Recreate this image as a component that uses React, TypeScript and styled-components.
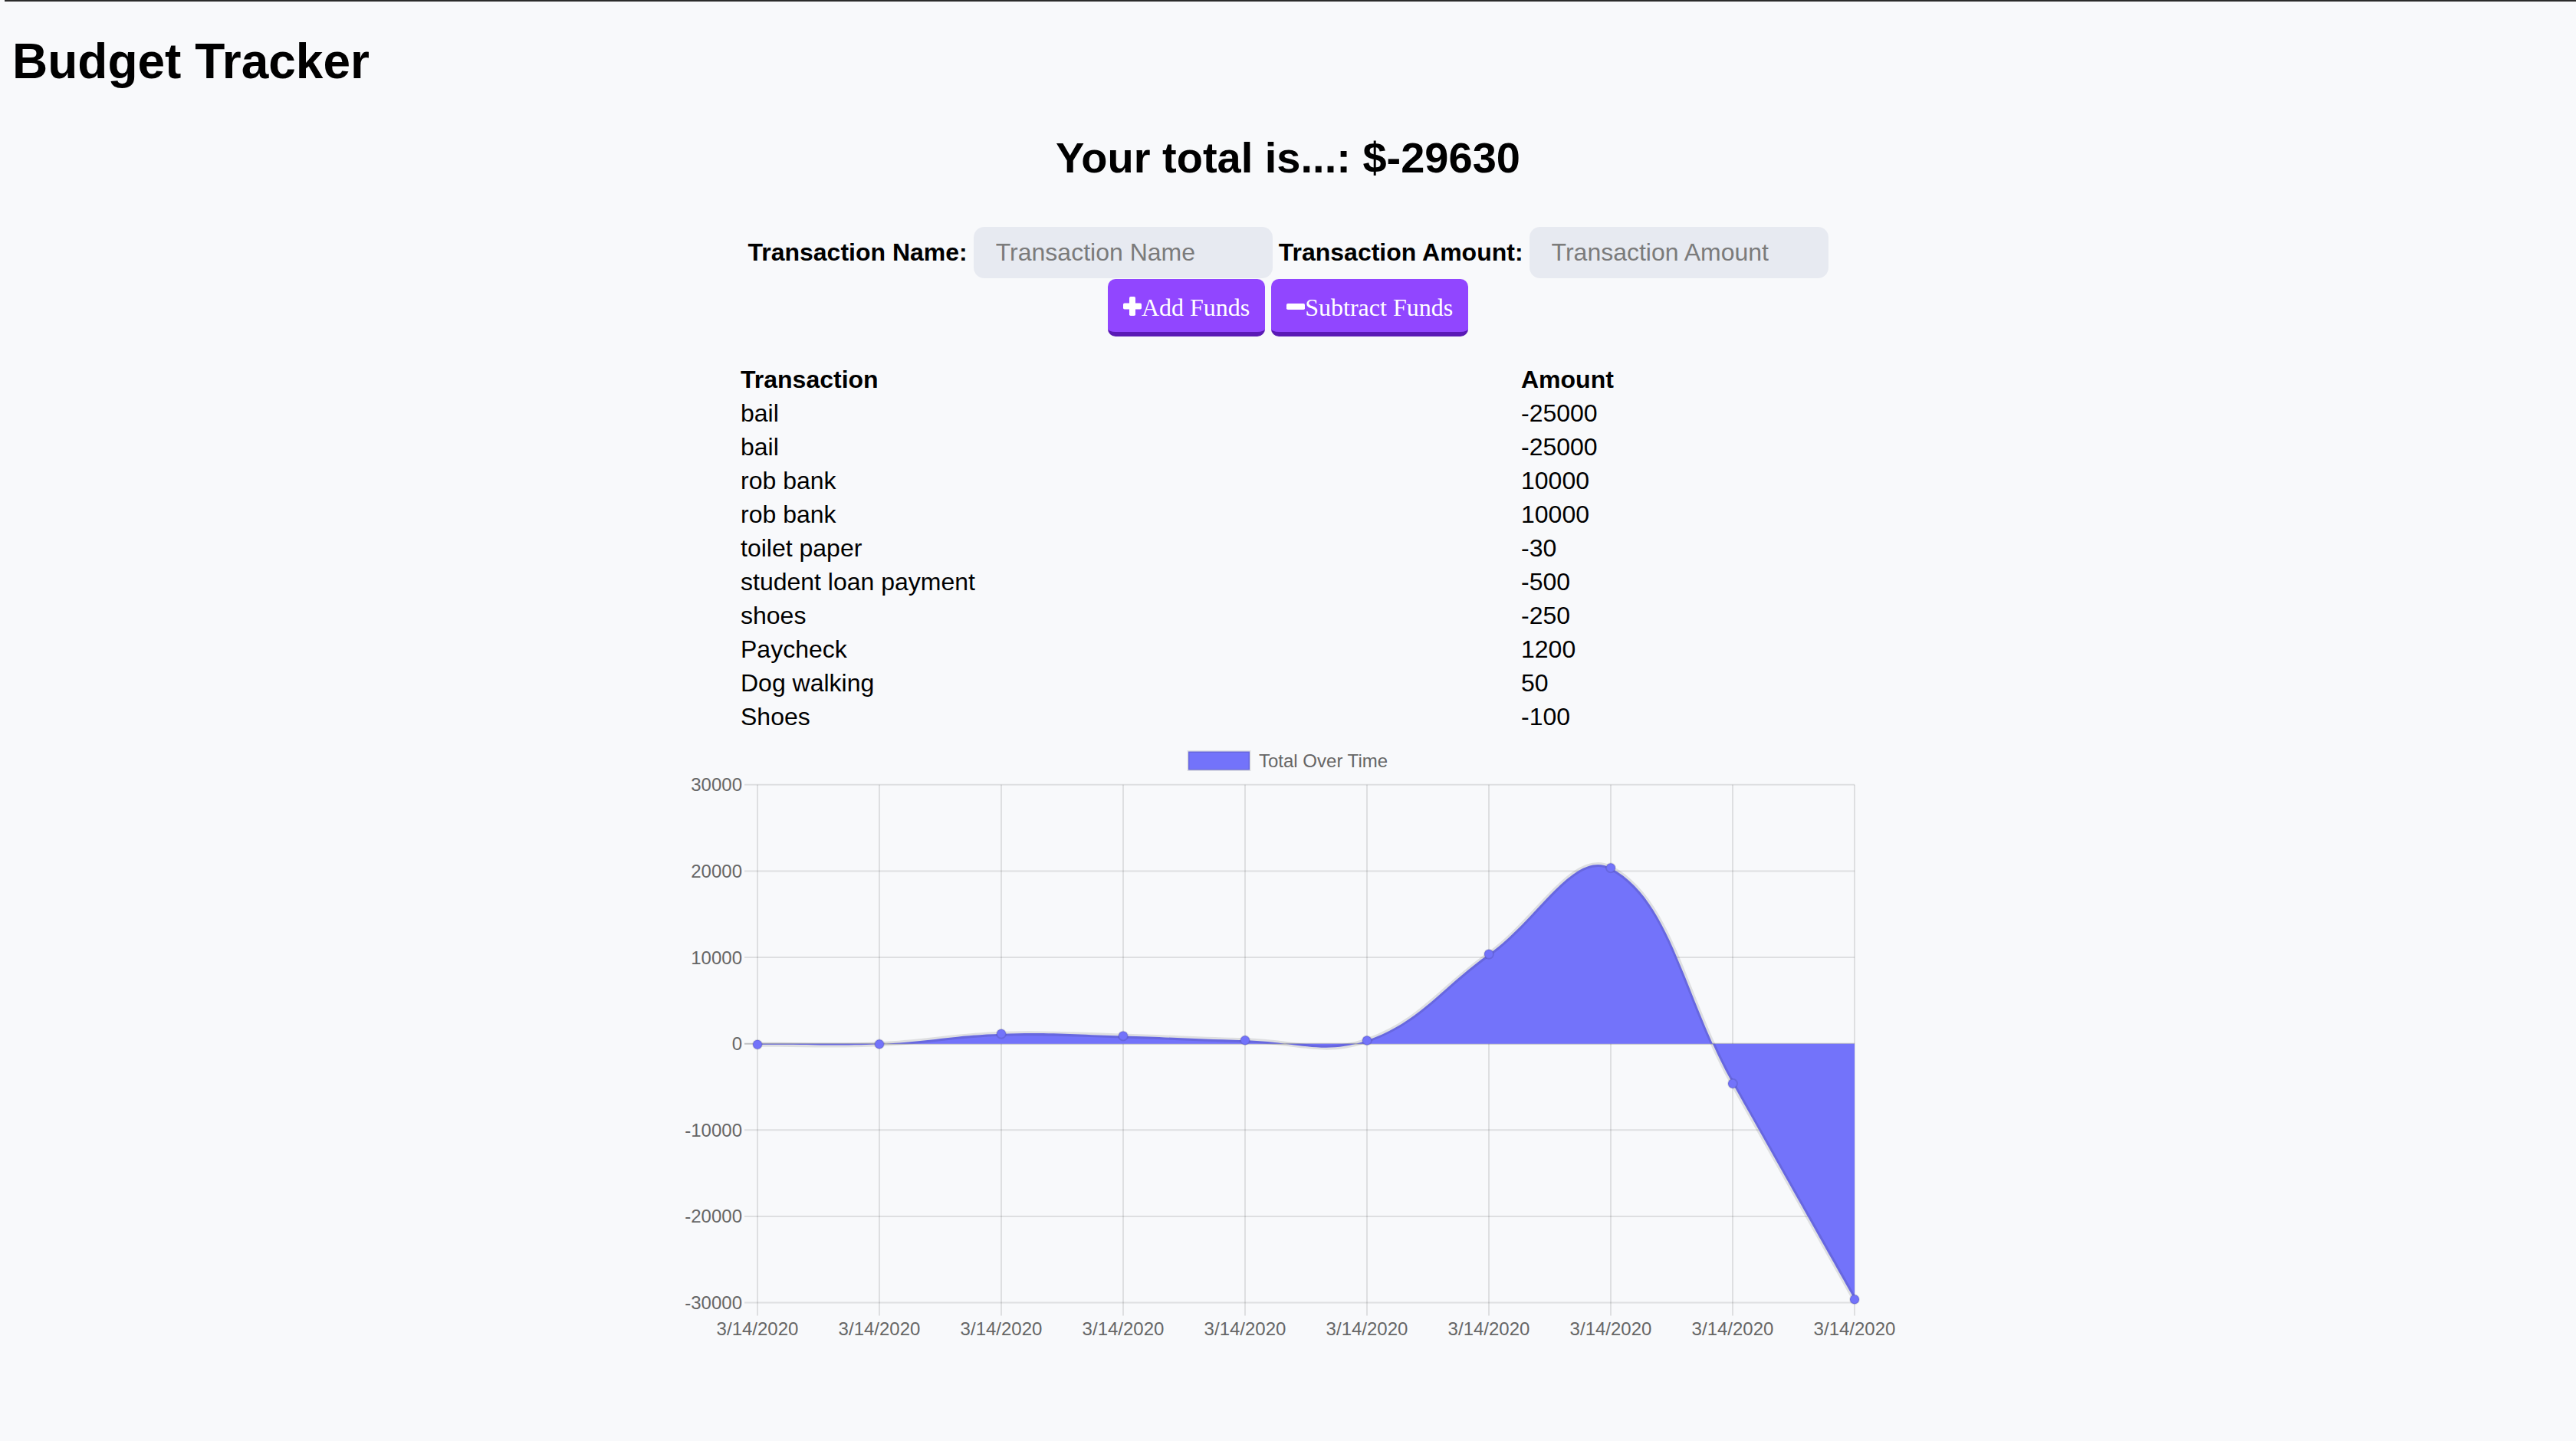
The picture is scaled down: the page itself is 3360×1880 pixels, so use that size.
import React from "react";
import styled, { createGlobalStyle } from "styled-components";

const GlobalStyle = createGlobalStyle`
  *, *::before, *::after { box-sizing: border-box; }
  html, body {
    margin: 0;
    padding: 0;
    background: #f8f9fb;
  }
  body {
    min-height: 1880px;
    font-family: "Liberation Sans", Arial, Helvetica, sans-serif;
    color: #000;
  }
`;

const ScreenEdge = styled.div`
  position: fixed;
  top: 0;
  left: 6px;
  right: 0;
  height: 2px;
  background: #2b2b2b;
  pointer-events: none;
`;

const Page = styled.main`
  padding: 44px 16px 0;
`;

const Title = styled.h1`
  margin: 0;
  font-size: 64px;
  line-height: 72px;
  font-weight: 700;
`;

const Total = styled.h2`
  margin: 58px 0 0;
  font-size: 56px;
  line-height: 64px;
  font-weight: 700;
  text-align: center;
`;

const EntryForm = styled.form`
  display: flex;
  flex-direction: column;
  align-items: center;
  margin-top: 58px;
`;

const FieldRow = styled.div`
  display: flex;
  align-items: center;
  gap: 8px;
`;

const FieldLabel = styled.label`
  font-size: 32px;
  line-height: 37px;
  font-weight: 700;
  white-space: nowrap;
`;

const TextField = styled.input`
  width: 390px;
  height: 67px;
  padding: 0 29px;
  border: none;
  border-radius: 14px;
  background: #e7eaf1;
  font-family: "Liberation Sans", Arial, sans-serif;
  font-size: 32px;
  color: #000;
  outline: none;
  &::placeholder {
    color: #7b7b7b;
  }
`;

const ButtonRow = styled.div`
  display: flex;
  gap: 8px;
  margin-top: 1px;
`;

const FundButton = styled.button`
  display: flex;
  align-items: flex-start;
  height: 75px;
  padding: 19px 20px 13px;
  border: none;
  border-bottom: 6px solid #5a1ab5;
  border-radius: 10px;
  background: #9146ff;
  color: #fff;
  font-family: "Liberation Serif", "Times New Roman", serif;
  font-size: 32px;
  line-height: 37px;
  cursor: pointer;
`;

const ButtonIcon = styled.svg`
  display: block;
  flex: none;
  width: 24px;
  height: 25px;
  margin-top: 4px;
`;

const Ledger = styled.table`
  width: 1440px;
  margin: 32px auto 0;
  border-spacing: 4px;
  table-layout: fixed;
  font-size: 32px;
  line-height: 36px;
`;

const HeadCell = styled.th`
  padding: 2px;
  text-align: left;
  font-weight: 700;
  &:first-child {
    width: 1014px;
  }
`;

const Cell = styled.td`
  padding: 2px;
  text-align: left;
`;

const ChartFrame = styled.svg`
  display: block;
  margin: 0 auto;
  width: 1600px;
  height: 820px;
  font-family: "Liberation Sans", Helvetica, Arial, sans-serif;
`;

const transactions: [string, number][] = [
  ["bail", -25000],
  ["bail", -25000],
  ["rob bank", 10000],
  ["rob bank", 10000],
  ["toilet paper", -30],
  ["student loan payment", -500],
  ["shoes", -250],
  ["Paycheck", 1200],
  ["Dog walking", 50],
  ["Shoes", -100],
];

type Pt = { x: number; y: number };

const AREA = { left: 988, right: 2419, top: 1023.3, bottom: 1699 };
const STEP = (AREA.bottom - AREA.top) / 6;
const ZERO_Y = AREA.top + 3 * STEP;
const FILL = "#7373fa";

function splineCurve(prev: Pt, cur: Pt, next: Pt, t: number) {
  const d01 = Math.hypot(cur.x - prev.x, cur.y - prev.y);
  const d12 = Math.hypot(next.x - cur.x, next.y - cur.y);
  let s01 = d01 / (d01 + d12);
  let s12 = d12 / (d01 + d12);
  if (isNaN(s01)) s01 = 0;
  if (isNaN(s12)) s12 = 0;
  const fa = t * s01;
  const fb = t * s12;
  return {
    prev: { x: cur.x - fa * (next.x - prev.x), y: cur.y - fa * (next.y - prev.y) },
    next: { x: cur.x + fb * (next.x - prev.x), y: cur.y + fb * (next.y - prev.y) },
  };
}

const clamp = (v: number, a: number, b: number) => Math.max(a, Math.min(b, v));

function buildChart() {
  const chronological = [...transactions].reverse();
  let running = 0;
  const totals = chronological.map(([, v]) => (running += v));
  const n = totals.length;
  const pts: Pt[] = totals.map((v, i) => ({
    x: AREA.left + (i * (AREA.right - AREA.left)) / (n - 1),
    y: ZERO_Y - (v * STEP) / 10000,
  }));
  const cps = pts.map((p, i) => {
    const prev = pts[i > 0 ? i - 1 : 0];
    const next = pts[i < n - 1 ? i + 1 : n - 1];
    const c = splineCurve(prev, p, next, 0.4);
    return {
      prev: {
        x: clamp(c.prev.x, AREA.left, AREA.right),
        y: clamp(c.prev.y, AREA.top, AREA.bottom),
      },
      next: {
        x: clamp(c.next.x, AREA.left, AREA.right),
        y: clamp(c.next.y, AREA.top, AREA.bottom),
      },
    };
  });
  let d = `M ${pts[0].x} ${pts[0].y}`;
  for (let i = 1; i < n; i++) {
    d += ` C ${cps[i - 1].next.x} ${cps[i - 1].next.y} ${cps[i].prev.x} ${cps[i].prev.y} ${pts[i].x} ${pts[i].y}`;
  }
  const fill = `${d} L ${pts[n - 1].x} ${ZERO_Y} L ${pts[0].x} ${ZERO_Y} Z`;
  return { pts, line: d, fill };
}

const PlusIcon = () => (
  <ButtonIcon viewBox="0 0 24 25" aria-hidden="true">
    <rect x="8" y="0" width="8" height="25" rx="1.8" fill="#fff" />
    <rect x="0" y="8.5" width="24" height="8" rx="1.8" fill="#fff" />
  </ButtonIcon>
);

const MinusIcon = () => (
  <ButtonIcon viewBox="0 0 24 25" aria-hidden="true">
    <rect x="0" y="9" width="24" height="8" rx="1.8" fill="#fff" />
  </ButtonIcon>
);

const TotalChart = () => {
  const { pts, line, fill } = buildChart();
  const yTicks = [30000, 20000, 10000, 0, -10000, -20000, -30000];
  const xs = pts.map((p) => p.x);
  return (
    <ChartFrame viewBox="880 958.5 1600 820">
      <rect x="1550" y="980" width="80" height="24" fill={FILL} stroke="rgba(0,0,0,0.1)" strokeWidth="3" />
      <text x="1642" y="992" fontSize="24" fill="#666" dominantBaseline="central">
        Total Over Time
      </text>
      {yTicks.map((v, i) => {
        const y = AREA.top + i * STEP;
        return (
          <g key={v}>
            <line
              x1={971}
              x2={AREA.right}
              y1={y}
              y2={y}
              stroke={v === 0 ? "rgba(0,0,0,0.22)" : "rgba(0,0,0,0.1)"}
              strokeWidth="2"
            />
            <text x="968" y={y} fontSize="24" fill="#666" textAnchor="end" dominantBaseline="central">
              {v}
            </text>
          </g>
        );
      })}
      {xs.map((x, i) => (
        <g key={i}>
          <line x1={x} x2={x} y1={AREA.top} y2={1716} stroke="rgba(0,0,0,0.1)" strokeWidth="2" />
          <text x={x} y="1741.5" fontSize="24" fill="#666" textAnchor="middle">
            3/14/2020
          </text>
        </g>
      ))}
      <path d={fill} fill={FILL} />
      <path d={line} fill="none" stroke="rgba(0,0,0,0.1)" strokeWidth="6" strokeLinejoin="round" />
      {pts.map((p, i) => (
        <circle key={i} cx={p.x} cy={p.y} r="6" fill={FILL} stroke="rgba(0,0,0,0.1)" strokeWidth="2" />
      ))}
    </ChartFrame>
  );
};

export default function App() {
  const total = transactions.reduce((s, [, v]) => s + v, 0);
  return (
    <>
      <GlobalStyle />
      <ScreenEdge />
      <Page>
        <Title>Budget Tracker</Title>
        <Total>Your total is...: ${total}</Total>
        <EntryForm onSubmit={(e) => e.preventDefault()}>
          <FieldRow>
            <FieldLabel htmlFor="t-name">Transaction Name:</FieldLabel>
            <TextField id="t-name" type="text" placeholder="Transaction Name" />
            <FieldLabel htmlFor="t-amount">Transaction Amount:</FieldLabel>
            <TextField id="t-amount" type="number" placeholder="Transaction Amount" />
          </FieldRow>
          <ButtonRow>
            <FundButton type="button">
              <PlusIcon />
              Add Funds
            </FundButton>
            <FundButton type="button">
              <MinusIcon />
              Subtract Funds
            </FundButton>
          </ButtonRow>
        </EntryForm>
        <Ledger>
          <thead>
            <tr>
              <HeadCell>Transaction</HeadCell>
              <HeadCell>Amount</HeadCell>
            </tr>
          </thead>
          <tbody>
            {transactions.map(([name, amount], i) => (
              <tr key={i}>
                <Cell>{name}</Cell>
                <Cell>{amount}</Cell>
              </tr>
            ))}
          </tbody>
        </Ledger>
        <TotalChart />
      </Page>
    </>
  );
}
